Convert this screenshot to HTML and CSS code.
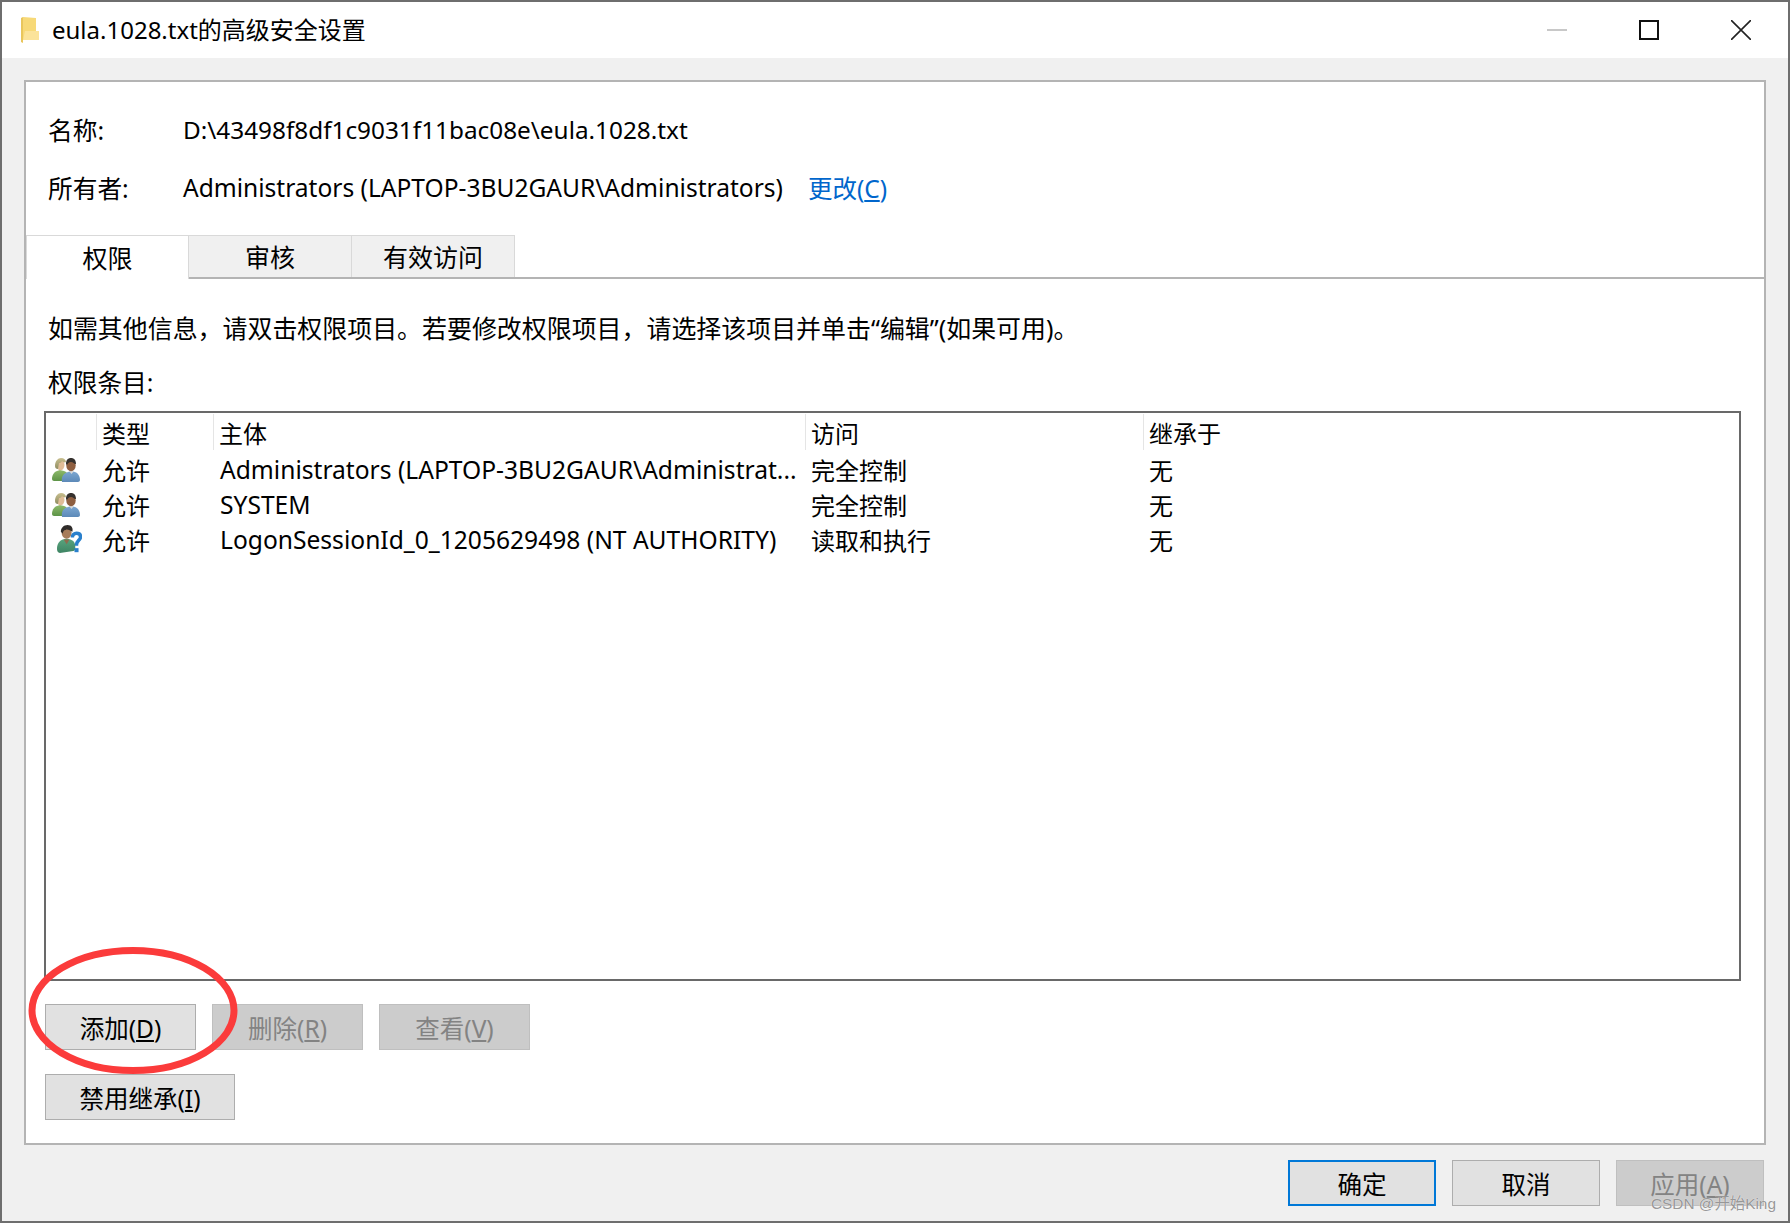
FILE: index.html
```html
<!DOCTYPE html>
<html lang="zh-CN">
<head>
<meta charset="utf-8">
<title>eula.1028.txt的高级安全设置</title>
<link rel="stylesheet" href="styles.css">
</head>
<body>
<svg class="defs" width="0" height="0" aria-hidden="true">
  <defs>
    <linearGradient id="hairL" x1="0" y1="0" x2="0" y2="1"><stop offset="0" stop-color="#c9bf8e"/><stop offset="1" stop-color="#8f8d62"/></linearGradient>
    <linearGradient id="shirtG" x1="0" y1="0" x2="0" y2="1"><stop offset="0" stop-color="#8fba6c"/><stop offset="1" stop-color="#5d9447"/></linearGradient>
    <linearGradient id="shirtB" x1="0" y1="0" x2="0" y2="1"><stop offset="0" stop-color="#7da8d2"/><stop offset="1" stop-color="#5c89b8"/></linearGradient>
    <linearGradient id="shirtT" x1="0" y1="0" x2="0" y2="1"><stop offset="0" stop-color="#5aa57f"/><stop offset="1" stop-color="#3e8463"/></linearGradient>
    <symbol id="users" viewBox="0 0 28 24">
      <path d="M0 21c0-4 2-7 5-8l3-1 4 1c3 1 5 4 5 8 0 1-1 2-2 2H2c-1 0-2-1-2-2z" fill="url(#shirtG)"/>
      <ellipse cx="8.500" cy="7" rx="4" ry="5.300" fill="#e0bd98"/>
      <path d="M3 8c0-5 3-8 6-8s5 2 5 4c-1 1-3 0-4-1-1 2-2 2-3 2l-1 6C4 11 3 10 3 8z" fill="url(#hairL)"/>
      <path d="M10 24c-1-6 2-9 6-10l3-1 4 1c3 1 5 4 5 8 0 1-1 2-2 2z" fill="url(#shirtB)"/>
      <path d="M17 13l2.500 3 2.500-3-1-1h-3z" fill="#d8d8d8"/>
      <ellipse cx="19" cy="7.500" rx="4.700" ry="5.800" fill="#8f5f40"/>
      <path d="M14 6c0-4 2-6 5-6s5 2 5 6c-2 0-3-2-5-2s-3 1-4 3z" fill="#35312e"/>
    </symbol>
    <symbol id="unknown" viewBox="0 0 26 30">
      <path d="M0 25c0-6 3-9 6-10l4-1 4 1c3 1 5 3 5 7v3c0 1-1 2-2 2l-14 2c-2 0-3-2-3-4z" fill="url(#shirtT)"/>
      <path d="M7 15l3 5 3-5z" fill="#8f6a4e"/>
      <ellipse cx="10" cy="8" rx="5.200" ry="6.300" fill="#a77c5a"/>
      <path d="M4 7c0-4 3-7 7-7s6 3 5 7c-2-1-5-3-7-2-2 0-3 2-3 4z" fill="#2f2c2a"/>
      <path d="M16 13c0-3 2-4.500 4.300-4.500 2.700 0 4.200 1.500 4.200 3.900 0 3.300-4.200 3.800-4.200 8.100v1" fill="none" stroke="#2a80cc" stroke-width="3.600"/>
      <rect x="18.200" y="24" width="4.200" height="4.200" fill="#2a80cc"/>
    </symbol>
  </defs>
</svg>

<div class="window">
  <header class="titlebar">
    <svg class="folder" viewBox="0 0 18 26" aria-hidden="true">
      <path d="M0 1l2-1v26l-2-1z" fill="#e9c65c"/>
      <path d="M2 0l13 1v19l3 1v2H2z" fill="#f7d978"/>
      <path d="M4 14h14v9H2z" fill="#fbe39a"/>
    </svg>
    <h1 class="title">eula.1028.txt的高级安全设置</h1>
    <div class="controls">
      <span class="ctrl"><svg viewBox="0 0 20 20" class="ctrl-icon"><path d="M0 10h20" stroke="#c8c8c8" stroke-width="2"/></svg></span>
      <span class="ctrl"><svg viewBox="0 0 20 20" class="ctrl-icon"><path d="M1 1h18v18H1z" fill="none" stroke="#111" stroke-width="2"/></svg></span>
      <span class="ctrl"><svg viewBox="0 0 20 20" class="ctrl-icon"><path d="M0 0l20 20M20 0L0 20" stroke="#222" stroke-width="1.600"/></svg></span>
    </div>
  </header>

  <main class="panel">
    <dl class="meta">
      <div class="meta-row"><dt>名称:</dt><dd class="path">D:\43498f8df1c9031f11bac08e\eula.1028.txt</dd></div>
      <div class="meta-row"><dt>所有者:</dt><dd class="owner">Administrators (LAPTOP-3BU2GAUR\Administrators)<a class="link" href="#">更改(<u>C</u>)</a></dd></div>
    </dl>

    <nav class="tabs">
      <span class="tab active">权限</span>
      <span class="tab">审核</span>
      <span class="tab">有效访问</span>
    </nav>

    <section class="content">
      <p class="hint">如需其他信息，请双击权限项目。若要修改权限项目，请选择该项目并单击“编辑”(如果可用)。</p>
      <p class="list-label">权限条目:</p>

      <div class="list">
        <div class="row head">
          <span></span><span class="cell">类型</span><span class="cell">主体</span><span class="cell">访问</span><span class="cell">继承于</span>
        </div>
        <div class="row">
          <span class="ico-cell"><svg class="ico"><use href="#users"/></svg></span><span class="cell">允许</span><span class="cell latin">Administrators (LAPTOP-3BU2GAUR\Administrat...</span><span class="cell">完全控制</span><span class="cell">无</span>
        </div>
        <div class="row">
          <span class="ico-cell"><svg class="ico"><use href="#users"/></svg></span><span class="cell">允许</span><span class="cell latin">SYSTEM</span><span class="cell">完全控制</span><span class="cell">无</span>
        </div>
        <div class="row">
          <span class="ico-cell"><svg class="ico ico-q"><use href="#unknown"/></svg></span><span class="cell">允许</span><span class="cell latin">LogonSessionId_0_1205629498 (NT AUTHORITY)</span><span class="cell">读取和执行</span><span class="cell">无</span>
        </div>
      </div>

      <div class="actions">
        <button class="btn btn-s">添加(<u>D</u>)</button>
        <button class="btn btn-s off">删除(<u>R</u>)</button>
        <button class="btn btn-s off">查看(<u>V</u>)</button>
      </div>
      <div class="actions second">
        <button class="btn btn-w">禁用继承(<u>I</u>)</button>
      </div>
    </section>
  </main>

  <footer class="footer">
    <button class="btn btn-f primary">确定</button>
    <button class="btn btn-f">取消</button>
    <button class="btn btn-f off">应用(<u>A</u>)</button>
  </footer>

  <svg class="circle" viewBox="0 0 210 127" aria-hidden="true">
    <ellipse cx="105" cy="63.500" rx="101" ry="60" fill="none" stroke="#fb3b3b" stroke-width="7"/>
  </svg>
  <span class="watermark">CSDN @开始King</span>
</div>
</body>
</html>
```
FILE: styles.css
```css
* { box-sizing: border-box; }
html, body { margin: 0; padding: 0; }
body {
  width: 1790px;
  height: 1223px;
  overflow: hidden;
  background: #f0f0f0;
  color: #000;
  font-family: "Noto Sans", "Noto Sans CJK SC", sans-serif;
  font-size: 25px;
}
.defs { position: absolute; }
.window {
  position: relative;
  width: 1790px;
  height: 1223px;
  border: 2px solid #6e6e6e;
  background: #f0f0f0;
  display: flex;
  flex-direction: column;
}
.titlebar {
  height: 56px;
  background: #fff;
  display: flex;
  align-items: center;
  padding-left: 19px;
  flex: none;
}
.folder { width: 18px; height: 26px; flex: none; margin-right: 13px; }
.title { margin: 0; font-size: 24px; font-weight: 400; line-height: 56px; flex: 1; }
.controls { display: flex; padding-right: 37px; gap: 72px; }
.ctrl { display: flex; }
.ctrl-icon { width: 20px; height: 20px; display: block; }
.panel {
  margin: 22px 22px 0;
  height: 1065px;
  flex: none;
  background: #fff;
  border: 2px solid #b4b4b4;
  display: flex;
  flex-direction: column;
}
.meta { margin: 0; padding: 18px 0 0 22px; height: 153px; }
.meta-row { display: flex; height: 58px; align-items: center; }
.meta dt { width: 135px; flex: none; font-size: 24.700px; }
.meta dd { margin: 0; display: flex; align-items: center; white-space: nowrap; }
.path { font-size: 24.330px; }
.owner { font-size: 24.550px; }
.link { color: #0066cc; margin-left: 25px; text-decoration: none; font-size: 24.500px; }
.link u { text-underline-offset: 2px; }
.tabs {
  display: flex;
  height: 44px;
  border-bottom: 2px solid #b4b4b4;
  flex: none;
}
.tab {
  width: 163px;
  height: 42px;
  padding-bottom: 2px;
  background: #f0f0f0;
  border: 1px solid #d9d9d9;
  border-bottom: 0;
  border-left: 0;
  display: flex;
  align-items: center;
  justify-content: center;
}
.tab.active {
  width: 163px;
  height: 44px;
  background: #fff;
  border-left: 1px solid #d9d9d9;
}
.content { padding: 0 0 0 18px; display: flex; flex-direction: column; }
.hint { margin: 31px 0 0 4px; line-height: 36px; height: 36px; font-size: 24.950px; }
.list-label { margin: 19px 0 0 4px; line-height: 36px; height: 36px; font-size: 24.700px; }
.list {
  margin-top: 10px;
  width: 1697px;
  height: 570px;
  background: #fff;
  border: 2px solid #696969;
  flex: none;
  font-size: 24px;
}
.row {
  display: grid;
  grid-template-columns: 50px 117px 592px 338px 1fr;
  height: 35px;
  align-items: center;
}
.row.head { height: 39px; }
.row.head span + span { border-left: 1px solid #e5e5e5; height: 36px; margin-top: -2px; line-height: 40px; padding-left: 5px; padding-top: 0; }
.cell { padding: 1px 0 0 6px; white-space: nowrap; overflow: hidden; line-height: 35px; }
.latin { font-size: 24.600px; padding: 0 0 0 7px; }
.ico-cell { display: flex; padding-left: 6px; }
.ico { width: 28px; height: 24px; display: block; }
.ico-q { width: 25px; height: 29px; margin-left: 5px; }
.actions { display: flex; gap: 16px; margin: 23px 0 0 1px; }
.actions.second { margin-top: 24px; }
.btn {
  height: 46px;
  padding: 0;
  font: inherit;
  font-size: 24.500px;
  color: #000;
  background: #e1e1e1;
  border: 1.500px solid #adadad;
}
.btn u { text-underline-offset: 2px; }
.btn-s { width: 151px; }
.btn-w { width: 190px; }
.btn-f { width: 148px; }
.btn.off { background: #cccccc; border-color: #bfbfbf; color: #838383; }
.btn.primary { border: 2px solid #0078d7; }
.footer {
  display: flex;
  justify-content: flex-end;
  gap: 16px;
  padding: 15px 24px 0 0;
}
.circle {
  position: absolute;
  left: 26px;
  top: 945px;
  width: 210px;
  height: 127px;
  pointer-events: none;
}
.watermark {
  position: absolute;
  right: 12px;
  bottom: 8px;
  font-family: "Liberation Sans", "Noto Sans CJK SC", sans-serif;
  font-size: 15.400px;
  line-height: 18px;
  color: rgba(125, 125, 125, 0.8);
  text-shadow: 0 0 1px #fff;
}
```
